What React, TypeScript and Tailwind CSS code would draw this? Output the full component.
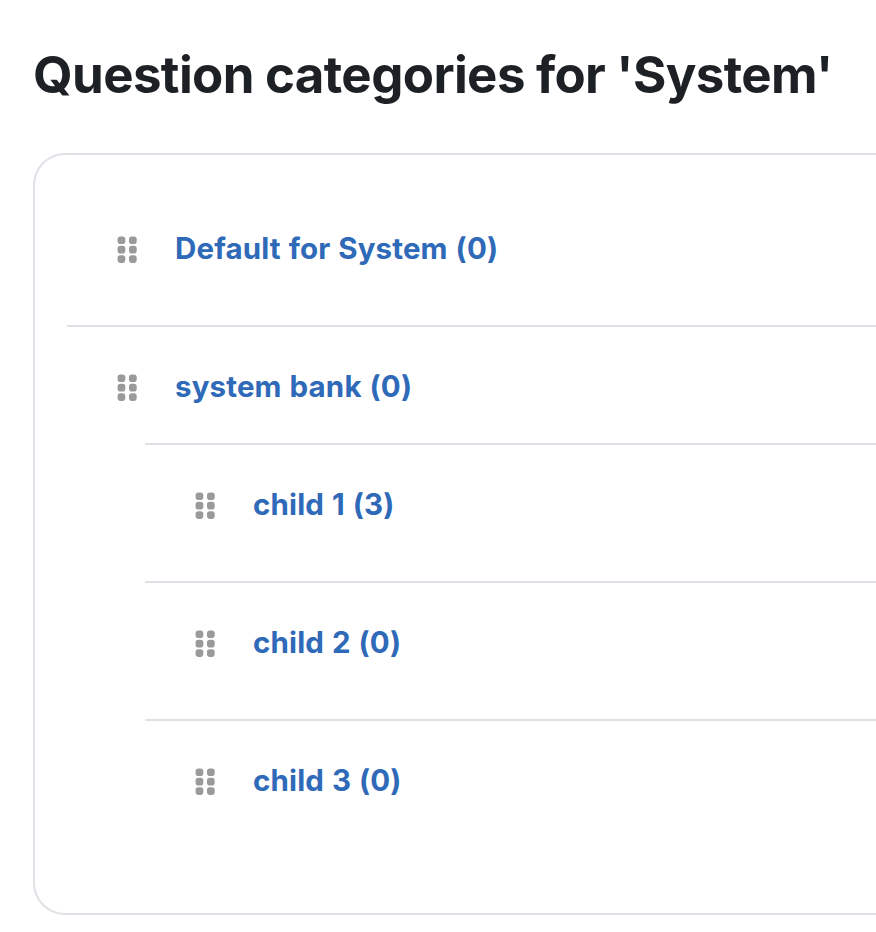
type Category = {
  name: string;
  count: number;
};

const children: Category[] = [
  { name: "child 1", count: 3 },
  { name: "child 2", count: 0 },
  { name: "child 3", count: 0 },
];

const DragHandle = () => (
  <svg width="20" height="28" viewBox="0 0 20 28" fill="#999a9b" className="shrink-0">
    {[0.4, 9.8, 19.2].map((y) =>
      [0.6, 12].map((x) => <rect key={`${x}-${y}`} x={x} y={y} width="7.7" height="7.7" rx="2.8" />)
    )}
  </svg>
);

const Row = ({ name, count }: Category) => (
  <div className="flex items-center h-10">
    <DragHandle />
    <a href="#" className="ml-[38px] pb-1 text-[29.5px] leading-10 font-bold tracking-[0.14px] [word-spacing:0.8px] text-[#2f6ab9] whitespace-nowrap">
      {name} ({count})
    </a>
  </div>
);

export default function App() {
  return (
    <main className="w-full h-[932px] overflow-hidden bg-white font-['Inter',sans-serif] pt-[43px] pl-[33px]">
      <h1 className="text-[51px] leading-[64px] font-bold tracking-[-0.62px] [word-spacing:-0.4px] text-[#1d2125] whitespace-nowrap">
        Question categories for 'System'
      </h1>

      <section className="mt-[46px] h-[762px] border-2 border-r-0 border-[#dee2e6] rounded-l-[32px] pl-8">
        <div className="h-[172px] pt-[75px] pl-[50px] border-b-2 border-[#dee2e6]">
          <Row name="Default for System" count={0} />
        </div>
        <div className="pt-[41px] pl-[50px]">
          <Row name="system bank" count={0} />
        </div>
        <ul className="mt-[35px] ml-[78px]">
          {children.map((child) => (
            <li key={child.name} className="h-[138px] pt-[41px] pl-[50px] border-t-2 border-[#dee2e6]">
              <Row {...child} />
            </li>
          ))}
        </ul>
      </section>
    </main>
  );
}
